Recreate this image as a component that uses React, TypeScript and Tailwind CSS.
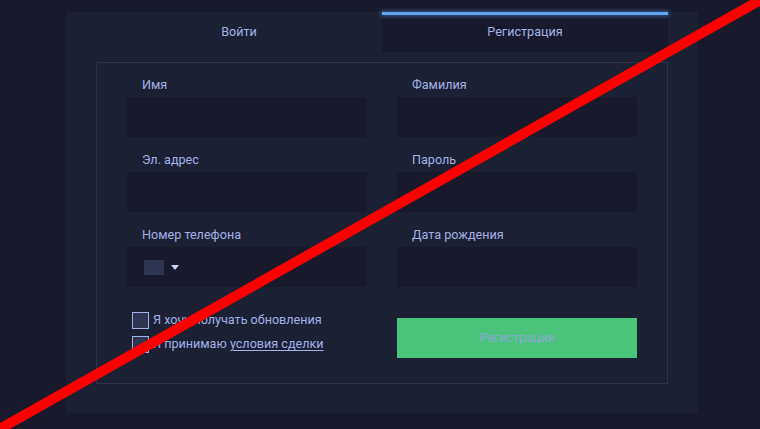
import React from "react";

const Field = ({ label, children }: { label: string; children?: React.ReactNode }) => (
  <div className="flex flex-col">
    <div className="pl-[15px] h-[16px] leading-[16px] text-[12.6px] text-[#a3b1e6] mb-[4px]">{label}</div>
    <div className="h-[40px] bg-[#181a2b] flex items-center">{children}</div>
  </div>
);

const Check = ({ children }: { children: React.ReactNode }) => (
  <div className="flex items-center gap-[4px] h-[24px]">
    <div className="w-[17px] h-[17px] border border-[#a3b1e6] bg-[#2f3450]" />
    <div className="text-[12.6px] text-[#a3b1e6] leading-[16px]">{children}</div>
  </div>
);

export default function App() {
  return (
    <div className="relative w-[760px] h-[429px] bg-[#181a2b] overflow-hidden" style={{ fontFamily: "Roboto, 'Noto Sans', sans-serif" }}>
      <div className="ml-[66px] mt-[12px] w-[632px] h-[401px] bg-[#1c2033] px-[30px] pb-[30px]">
        <div className="flex h-[40px]">
          <div className="w-[286px] flex items-center justify-center text-[12.6px] text-[#a3b1e6]">Войти</div>
          <div className="relative w-[286px] flex items-center justify-center text-[12.6px] text-[#a3b1e6] bg-[#181a2b]">
            <div className="absolute left-0 right-0 top-0 h-[3px] bg-[#5ea6f2] shadow-[0_0_4px_1px_rgba(94,166,242,0.5)]" />
            Регистрация
          </div>
        </div>
        <div className="mt-[10px] border border-[#2e3249] px-[30px] pt-[14px] h-[322px]">
          <div className="grid grid-cols-2 gap-x-[30px] gap-y-[15px]">
            <Field label="Имя" />
            <Field label="Фамилия" />
            <Field label="Эл. адрес" />
            <Field label="Пароль" />
            <Field label="Номер телефона">
              <div className="ml-[17px] w-[20px] h-[15px] bg-[#2f3450]" />
              <svg width="8" height="5" viewBox="0 0 8 5" className="ml-[7px]">
                <path d="M0 0 L8 0 L4 5 Z" fill="#c9d2f2" />
              </svg>
            </Field>
            <Field label="Дата рождения" />
          </div>
          <div className="grid grid-cols-2 gap-x-[30px]">
            <div className="pl-[5px] pt-[21px] flex flex-col">
              <Check>Я хочу получать обновления</Check>
              <Check>
                Я принимаю <span className="underline underline-offset-2">условия сделки</span>
              </Check>
            </div>
            <div className="pt-[31px]">
              <div className="h-[40px] bg-[#4ac47a] flex items-center justify-center text-[12.6px] text-[#8ca8d8]">Регистрация</div>
            </div>
          </div>
        </div>
      </div>
      <svg className="absolute inset-0 pointer-events-none" width="760" height="429" viewBox="0 0 760 429">
        <line x1="-4" y1="431" x2="764" y2="-2" stroke="#ff0000" strokeWidth="10" />
      </svg>
    </div>
  );
}
